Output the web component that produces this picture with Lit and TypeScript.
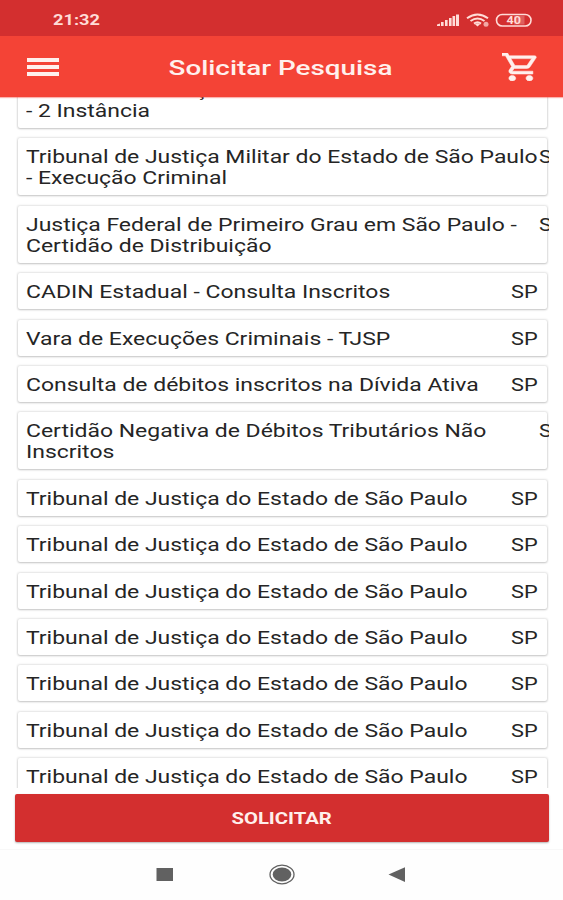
import { LitElement, html, css } from "lit";
import { customElement, property } from "lit/decorators.js";

interface Entry {
  lines: string[];
  uf: string;
}

const TJSP = "Tribunal de Justiça do Estado de São Paulo";

const ENTRIES: Entry[] = [
  { lines: [TJSP, "- 2 Instância"], uf: "" },
  { lines: ["Tribunal de Justiça Militar do Estado de São Paulo", "- Execução Criminal"], uf: "SP" },
  { lines: ["Justiça Federal de Primeiro Grau em São Paulo -", "Certidão de Distribuição"], uf: "SP" },
  { lines: ["CADIN Estadual - Consulta Inscritos"], uf: "SP" },
  { lines: ["Vara de Execuções Criminais - TJSP"], uf: "SP" },
  { lines: ["Consulta de débitos inscritos na Dívida Ativa"], uf: "SP" },
  { lines: ["Certidão Negativa de Débitos Tributários Não", "Inscritos"], uf: "SP" },
  ...Array.from({ length: 7 }, () => ({ lines: [TJSP], uf: "SP" })),
];

@customElement("status-bar")
export class StatusBar extends LitElement {
  static styles = css`
    :host { display: flex; justify-content: space-between; align-items: center; height: 36px; padding: 3px 29px 0 53px; box-sizing: border-box; background: #d32f2f; color: #ffdcd7; }
    .time { font: 700 14px/16px Roboto, sans-serif; transform: scaleX(1.3); transform-origin: left; }
    .icons { display: block; width: 98px; height: 16px; }
    .charge { font: 700 10.500px Roboto, sans-serif; }
  `;
  render() {
    return html`
      <span class="time">21:32</span>
      <svg class="icons" viewBox="0 0 98 16" fill="currentColor">
        <path d="M1 14v-1.500l3-1V14zM5 14v-4h2.600v4zM9 14V8h2.600v6zM13 14V6h2.600v8zM16.500 14V4h2.600v10zM20 14V2.500h3V14z" />
        <g fill="none" stroke="currentColor" stroke-width="2">
          <path d="M31 6.200Q41.500 -1.400 52 6.200" />
          <path d="M34.500 9Q41.500 4 48.500 9" />
          <path d="M38 11.600Q41.500 9 45 11.600" />
          <rect x="60.500" y="2.500" width="34.500" height="11.500" rx="5.700" stroke-width="1.600" />
        </g>
        <path d="M39 12.200Q41.500 10.500 44 12.200L41.500 14.400z" />
        <circle cx="50" cy="12.300" r="2.500" opacity=".7" />
        <path d="M78 4h10.500v8.500H78z" opacity=".28" />
        <text class="charge" x="70.500" y="12.200" textLength="14.500" lengthAdjust="spacingAndGlyphs">40</text>
      </svg>
    `;
  }
}

@customElement("title-bar")
export class TitleBar extends LitElement {
  static styles = css`
    :host { display: grid; grid-template-columns: 1fr auto 1fr; align-items: center; height: 61px; padding: 1px 25px 0 27px; box-sizing: border-box; background: #f44336; color: #fff0ed; position: relative; z-index: 1; box-shadow: 0 1px 1px rgba(244, 67, 54, 0.4); }
    .menu { display: flex; flex-direction: column; gap: 3.500px; width: 32px; }
    .bar { height: 3.500px; background: currentColor; }
    .title { font: 500 21px/26px Roboto, sans-serif; padding-top: 2px; transform: translateX(-2px) scaleX(1.325); white-space: nowrap; }
    .cart { justify-self: end; width: 36px; height: 28px; }
  `;
  render() {
    return html`
      <div class="menu"><div class="bar"></div><div class="bar"></div><div class="bar"></div></div>
      <div class="title">Solicitar Pesquisa</div>
      <svg class="cart" viewBox="1 2 21 20" preserveAspectRatio="none" fill="currentColor" stroke="currentColor" stroke-width=".35">
        <path d="M15.550 13c.75 0 1.410-.41 1.750-1.030l3.580-6.490A.996.996 0 0 0 20.010 4H5.210l-.94-2H1v2h2l3.600 7.590-1.350 2.440C4.520 15.370 5.480 17 7 17h12v-2H7l1.100-2h7.450zM6.160 6h12.150l-2.760 5H8.530L6.160 6zM7 18c-1.100 0-1.990.9-1.990 2S5.900 22 7 22s2-.9 2-2-.9-2-2-2zm10 0c-1.100 0-1.990.9-1.990 2s.89 2 1.990 2 2-.9 2-2-.9-2-2-2z" />
      </svg>
    `;
  }
}

@customElement("search-card")
export class SearchCard extends LitElement {
  @property({ attribute: false }) entry!: Entry;
  static styles = css`
    :host { display: flex; box-sizing: border-box; flex: none; margin: 0 2px; padding: 9px 9px 6px 8px; background: #fff; border-radius: 2px; box-shadow: 0 1px 2px rgba(0, 0, 0, 0.15), 0 0 2px 1px rgba(0, 0, 0, 0.1); font: 400 17.500px/21px Roboto, sans-serif; color: #252525; }
    .name { flex: 1; min-width: 0; }
    .line { width: max-content; white-space: nowrap; transform: scaleX(1.311); transform-origin: left; }
    .uf { width: 27px; white-space: nowrap; }
    .pushed { margin-right: -28px; }
    .code { transform: scaleX(1.24); transform-origin: left; width: max-content; }
  `;
  render() {
    const wraps = this.entry.lines.length > 1;
    return html`
      <div class="name">${this.entry.lines.map((l) => html`<div class="line">${l}</div>`)}</div>
      <div class="uf ${wraps ? "pushed" : ""}"><div class="code">${this.entry.uf}</div></div>
    `;
  }
}

@customElement("nav-bar")
export class NavBar extends LitElement {
  static styles = css`
    :host { display: grid; grid-template-columns: 18px 26px 18px; justify-content: center; column-gap: 95px; align-items: center; height: 51px; background: #fefefe; border-top: 1px solid #f8f8f8; box-sizing: border-box; color: #616161; }
    svg { display: block; width: 100%; height: 22px; overflow: visible; }
  `;
  render() {
    return html`
      <svg viewBox="0 0 18 22" fill="currentColor"><path d="M.5 4h16.500v13H.5z" /></svg>
      <svg viewBox="0 0 26 22" fill="currentColor">
        <ellipse cx="13" cy="10.500" rx="12" ry="9.300" fill="none" stroke="currentColor" stroke-width="1.300" />
        <ellipse cx="13" cy="10.500" rx="9.300" ry="7" />
      </svg>
      <svg viewBox="0 0 18 22" fill="currentColor"><path d="M-1.500 10.500 15 3.200v14.800z" /></svg>
    `;
  }
}

@customElement("app-root")
export class AppRoot extends LitElement {
  static styles = css`
    :host { display: flex; flex-direction: column; height: 900px; background: #fff; overflow: hidden; }
    .list { display: flex; flex-direction: column; gap: 10.400px; height: 691px; margin: 0 14px 0 16px; overflow: hidden; }
    .first { margin-top: -26px; }
    .submit { display: flex; align-items: center; justify-content: center; flex: none; height: 48px; margin: 6px 14px 7px 15px; padding: 2px 0 0; border: 0; border-radius: 2px; background: #d32f2f; box-shadow: 0 1px 2px rgba(0, 0, 0, 0.3); color: #ffefec; font: 700 16px/20px Roboto, sans-serif; }
    .label { transform: scaleX(1.265); }
  `;
  render() {
    return html`
      <status-bar></status-bar>
      <title-bar></title-bar>
      <div class="list">
        ${ENTRIES.map((e, i) => html`<search-card class=${i === 0 ? "first" : ""} .entry=${e}></search-card>`)}
      </div>
      <button class="submit"><span class="label">SOLICITAR</span></button>
      <nav-bar></nav-bar>
    `;
  }
}
